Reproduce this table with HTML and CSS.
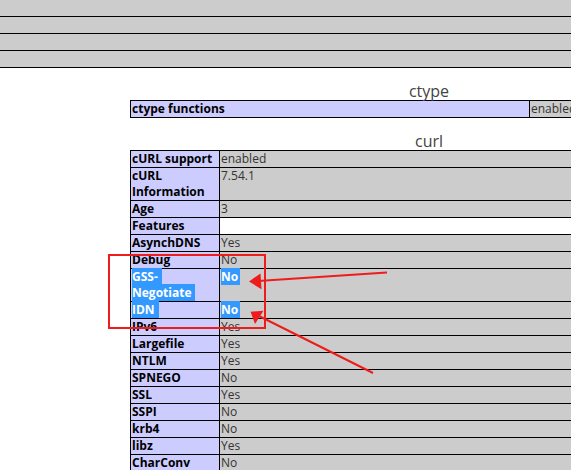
FILE: index.html
```html
<!DOCTYPE html>
<html>
<head>
<meta charset="utf-8">
<title>phpinfo</title>
<link rel="stylesheet" href="styles.css">
</head>
<body>
<div class="bands">
  <div class="band"></div>
  <div class="band"></div>
  <div class="band"></div>
  <div class="band"></div>
</div>
<div class="section">
  <h2 class="heading">ctype</h2>
  <table class="info info-ctype">
    <colgroup><col class="col-e-wide"><col class="col-v"></colgroup>
    <tr><td class="e">ctype functions</td><td class="v">enabled</td></tr>
  </table>
  <h2 class="heading heading-2">curl</h2>
  <table class="info info-curl">
    <colgroup><col class="col-e-narrow"><col class="col-v"></colgroup>
    <tr><td class="e">cURL support</td><td class="v">enabled</td></tr>
    <tr><td class="e">cURL<br>Information</td><td class="v">7.54.1</td></tr>
    <tr><td class="e">Age</td><td class="v">3</td></tr>
    <tr><td class="e">Features</td><td class="v blank"></td></tr>
    <tr><td class="e">AsynchDNS</td><td class="v">Yes</td></tr>
    <tr><td class="e">Debug</td><td class="v">No</td></tr>
    <tr><td class="e"><span class="sel">GSS-</span><br><span class="sel">Negotiate</span></td><td class="v"><span class="sel sel-v">No </span></td></tr>
    <tr><td class="e"><span class="sel">IDN</span></td><td class="v"><span class="sel sel-v">No</span></td></tr>
    <tr><td class="e">IPv6</td><td class="v">Yes</td></tr>
    <tr><td class="e">Largefile</td><td class="v">Yes</td></tr>
    <tr><td class="e">NTLM</td><td class="v">Yes</td></tr>
    <tr><td class="e">SPNEGO</td><td class="v">No</td></tr>
    <tr><td class="e">SSL</td><td class="v">Yes</td></tr>
    <tr><td class="e">SSPI</td><td class="v">No</td></tr>
    <tr><td class="e">krb4</td><td class="v">No</td></tr>
    <tr><td class="e">libz</td><td class="v">Yes</td></tr>
    <tr><td class="e">CharConv</td><td class="v">No</td></tr>
  </table>
</div>
<svg class="annot" width="571" height="470" viewBox="0 0 571 470" xmlns="http://www.w3.org/2000/svg">
  <rect x="109" y="255" width="156" height="73" fill="none" stroke="#ee1c1c" stroke-width="2"/>
  <line x1="387" y1="272.5" x2="258" y2="281" stroke="#ee1c1c" stroke-width="2"/>
  <polygon points="249,281.6 260.5,273.4 261.5,289.2" fill="#ee1c1c"/>
  <line x1="373" y1="373" x2="259" y2="316" stroke="#ee1c1c" stroke-width="2"/>
  <polygon points="250.6,311.7 263.5,310.8 255,324" fill="#ee1c1c"/>
</svg>
</body>
</html>
```

FILE: styles.css
```css
html, body {
  margin: 0;
  padding: 0;
  overflow: hidden;
  background: #ffffff;
}

body {
  width: 571px;
  height: 470px;
  position: relative;
  font-family: "Open Sans", "DejaVu Sans", sans-serif;
  font-size: 12px;
  color: #000;
}

.band {
  height: 16px;
  background: #cccccc;
  border-bottom: 1px solid #000;
}

.section {
  margin-left: 130px;
  width: 598px;
}

.heading {
  margin: 0;
  height: 32px;
  box-sizing: border-box;
  padding-top: 15px;
  font-size: 16px;
  line-height: 17px;
  font-weight: normal;
  text-align: center;
  color: #444;
}

.heading-2 {
  padding-top: 15px;
}

.info {
  border-collapse: collapse;
  table-layout: fixed;
  width: 598px;
}

.col-e-wide { width: 399px; }
.col-e-narrow { width: 89px; }

.info td {
  border: 1px solid #000;
  padding: 0 0 0 1px;
  line-height: 16px;
  vertical-align: top;
  white-space: nowrap;
}

.e {
  background: #ccccff;
  font-weight: bold;
  color: #000;
}

.v {
  background: #cccccc;
  color: #333;
}

.v.blank {
  background: #ffffff;
  height: 16px;
}

.sel {
  background: #3399ff;
  color: #ffffff;
  padding-right: 4px;
}

.sel-v {
  font-weight: bold;
  padding-right: 2px;
}

.annot {
  position: absolute;
  left: 0;
  top: 0;
  pointer-events: none;
}
```
